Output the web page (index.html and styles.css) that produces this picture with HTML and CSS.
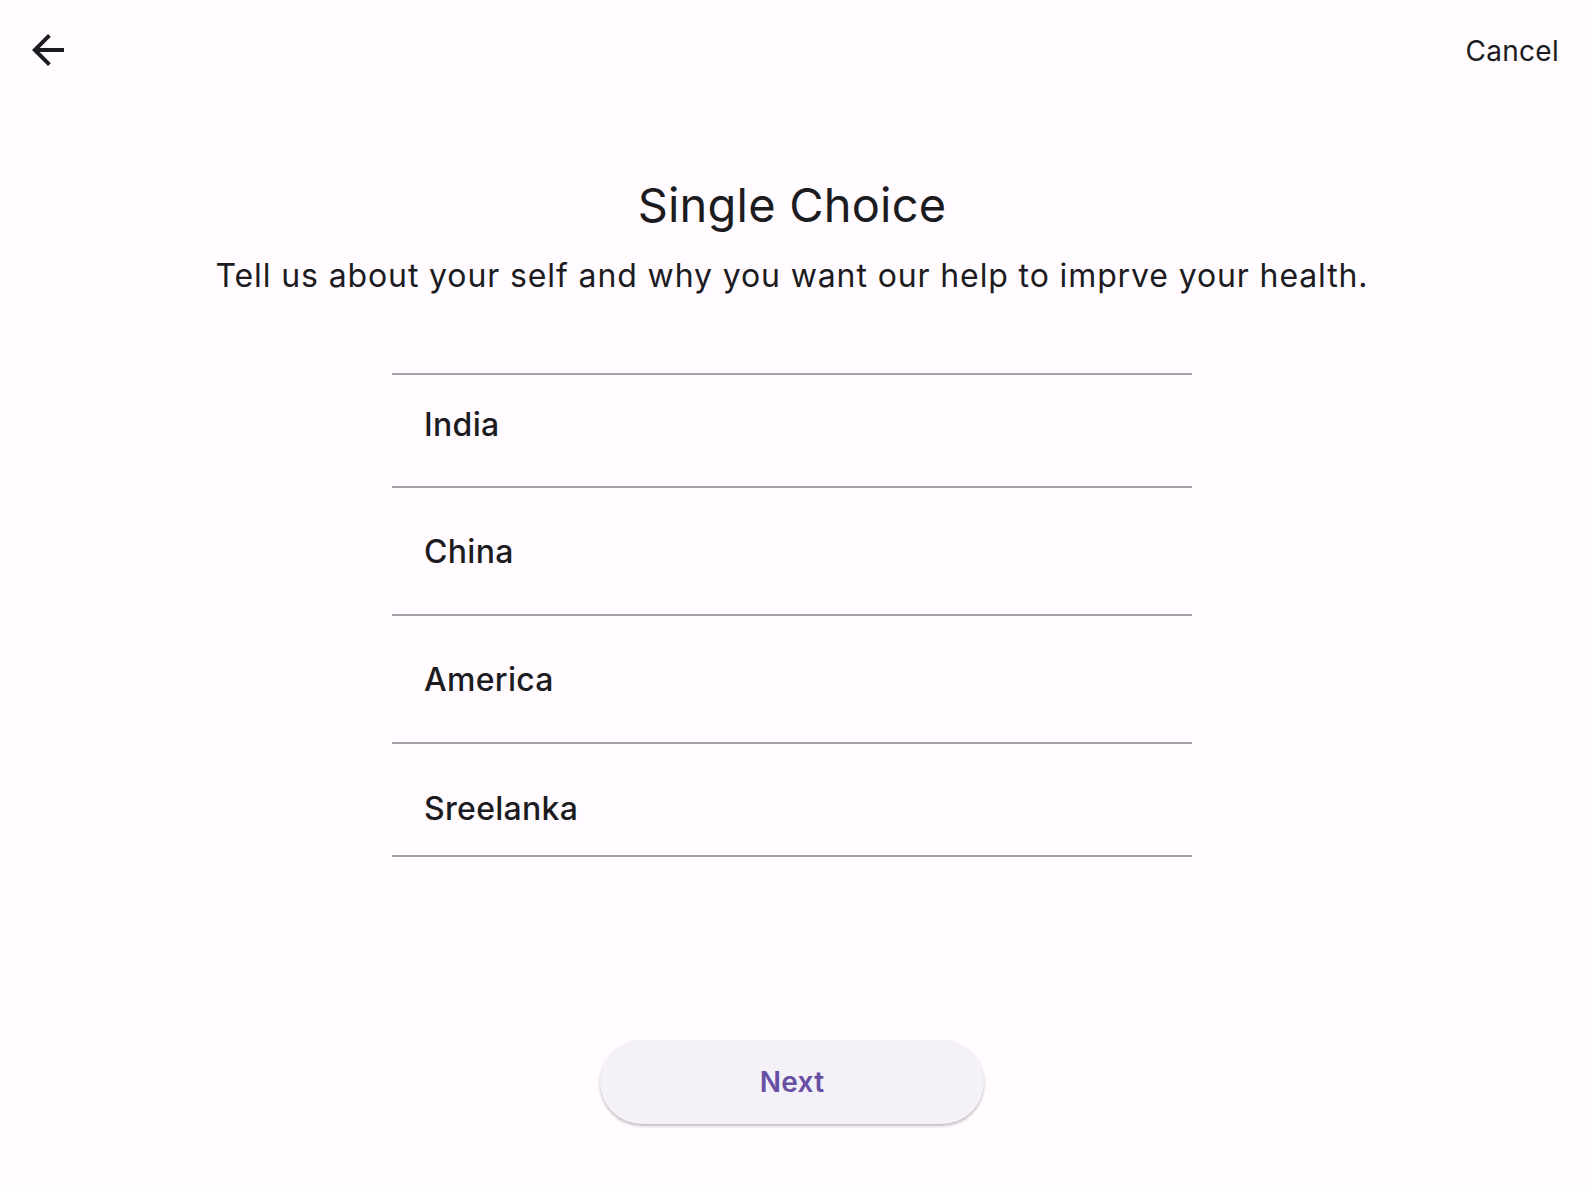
FILE: index.html
```html
<!DOCTYPE html>
<html lang="en">
<head>
  <meta charset="UTF-8">
  <meta name="viewport" content="width=device-width, initial-scale=1.0">
  <title>Single Choice</title>
  <link rel="stylesheet" href="styles.css">
</head>
<body>
  <div class="page">
    <header class="topbar">
      <button class="back" aria-label="Back">
        <svg viewBox="0 0 24 24" width="48" height="48">
          <path d="M20 11H7.83l5.59-5.59L12 4l-8 8 8 8 1.41-1.41L7.83 13H20v-2z" fill="currentColor"/>
        </svg>
      </button>
      <button class="cancel">Cancel</button>
    </header>

    <main class="question">
      <h1>Single Choice</h1>
      <p class="subtitle">Tell us about your self and why you want our help to imprve your health.</p>

      <ul class="options">
        <li class="option">India</li>
        <li class="option">China</li>
        <li class="option">America</li>
        <li class="option">Sreelanka</li>
      </ul>
    </main>

    <footer class="actions">
      <button class="next">Next</button>
    </footer>
  </div>
</body>
</html>
```

FILE: styles.css
```css
body {
  margin: 0;
  padding: 0;
  font-family: 'Inter', 'Roboto', sans-serif;
  background-color: #fffbfe;
  color: #1c1b1f;
}
button {
  font-family: inherit;
  background: none;
  border: none;
  padding: 0;
  color: inherit;
  cursor: pointer;
}
.page {
  width: 1584px;
  height: 1186px;
  display: flex;
  flex-direction: column;
}
.topbar {
  height: 100px;
  display: flex;
  align-items: center;
  justify-content: space-between;
  padding: 0 25px 0 24px;
}
.back {
  width: 48px;
  height: 48px;
  display: flex;
  color: #1c1b1f;
}
.cancel {
  padding-top: 2px;
  font-size: 28px;
  letter-spacing: 0.3px;
  color: #1c1b1f;
}
.question {
  display: flex;
  flex-direction: column;
  align-items: center;
}
h1 {
  margin: 79px 0 0;
  font-size: 47px;
  font-weight: 400;
  line-height: 52px;
  letter-spacing: 0.2px;
}
.subtitle {
  margin: 25px 0 0;
  font-size: 32px;
  line-height: 40px;
  letter-spacing: 0.88px;
}
.options {
  list-style: none;
  margin: 77px 0 0;
  padding: 0;
  width: 800px;
  border-top: 2px solid #a3a1a6;
  border-bottom: 2px solid #a3a1a6;
}
.option {
  height: 126px;
  display: flex;
  align-items: center;
  padding: 0 32px;
  font-size: 32px;
  font-weight: 500;
  letter-spacing: 0.3px;
  border-bottom: 2px solid #a3a1a6;
}
.option:first-child {
  height: 98px;
  padding-bottom: 13px;
}
.option:last-child {
  height: 94px;
  padding-top: 17px;
  border-bottom: none;
}
.actions {
  margin-top: auto;
  padding-bottom: 62px;
  display: flex;
  justify-content: center;
}
.next {
  width: 384px;
  height: 84px;
  border-radius: 42px;
  background: #f4f1f8;
  box-shadow: 0 2px 3px rgba(0, 0, 0, 0.25);
  color: #6750a4;
  font-size: 28px;
  font-weight: 600;
  letter-spacing: 0.3px;
}
```
